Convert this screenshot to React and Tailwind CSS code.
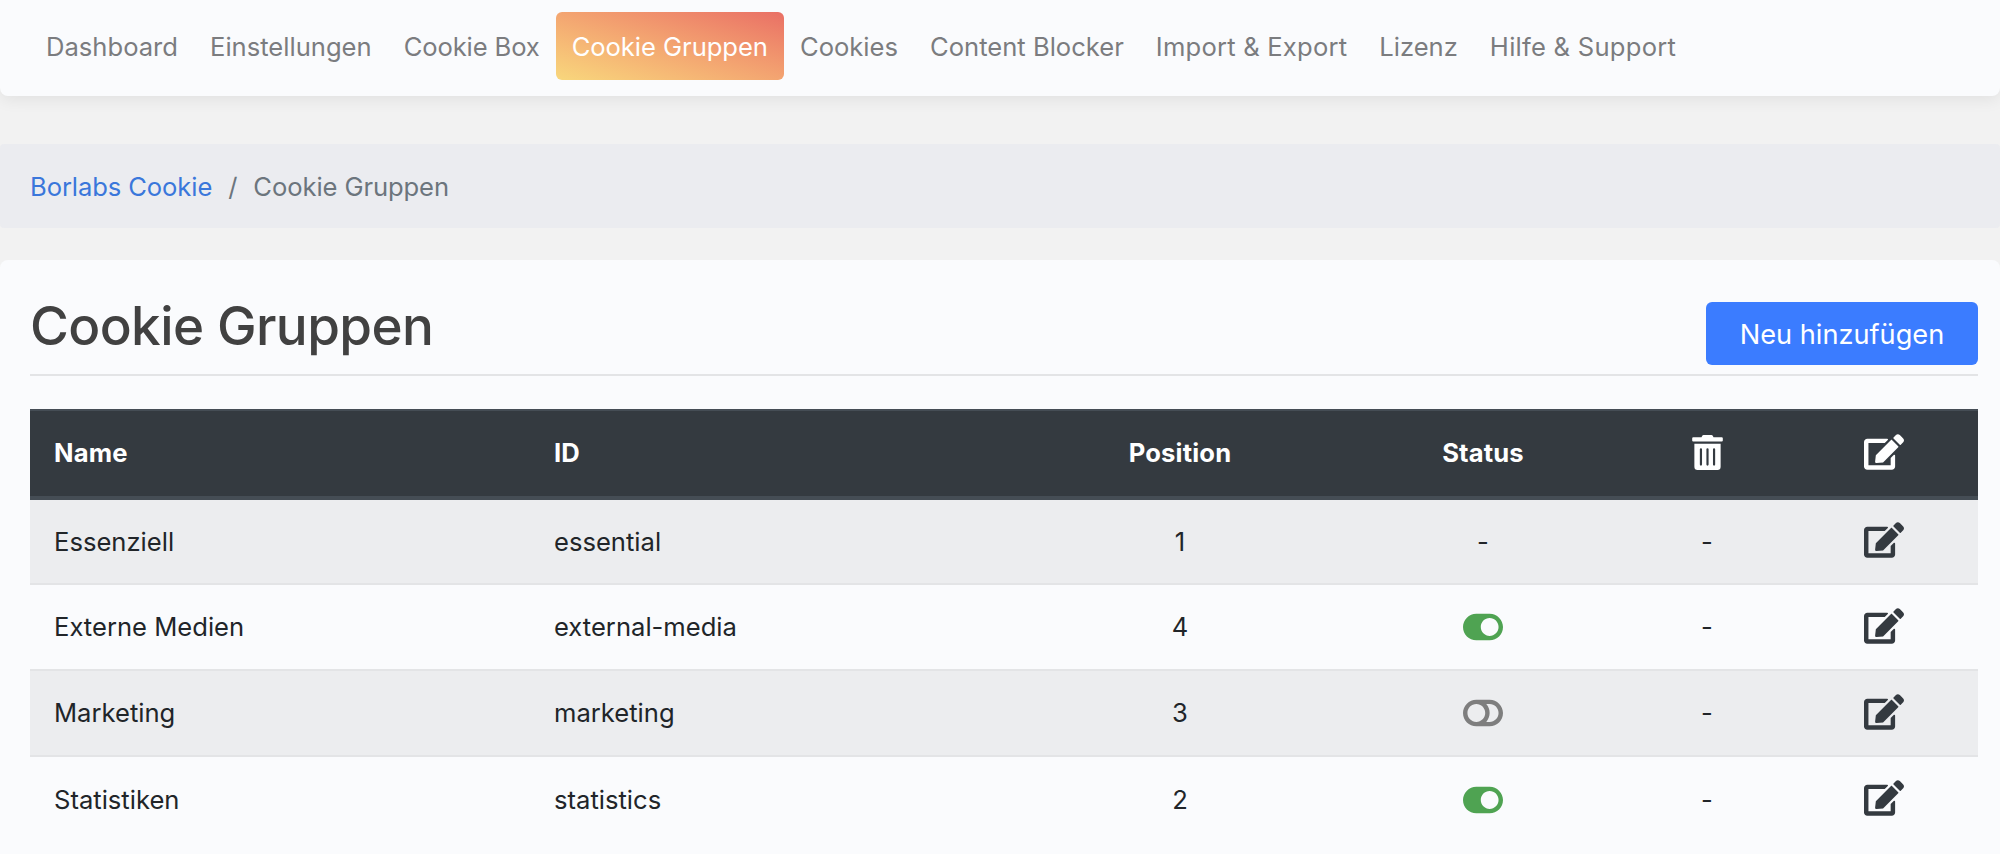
import { FaEdit, FaTrashAlt, FaToggleOn, FaToggleOff } from "react-icons/fa"

const navItems = [
  { label: "Dashboard", tracking: "" },
  { label: "Einstellungen", tracking: "" },
  { label: "Cookie Box", tracking: "tracking-[-0.13px]" },
  { label: "Cookie Gruppen", tracking: "tracking-[-0.05px]", active: true },
  { label: "Cookies", tracking: "" },
  { label: "Content Blocker", tracking: "" },
  { label: "Import & Export", tracking: "tracking-[0.2px]" },
  { label: "Lizenz", tracking: "" },
  { label: "Hilfe & Support", tracking: "tracking-[0.25px]" },
]

const rows = [
  { name: "Essenziell", id: "essential", position: 1, status: null, bg: "bg-[#ecedef]" },
  { name: "Externe Medien", id: "external-media", position: 4, status: true, bg: "" },
  { name: "Marketing", id: "marketing", position: 3, status: false, bg: "bg-[#ecedef]" },
  { name: "Statistiken", id: "statistics", position: 2, status: true, bg: "" },
]

const Status = ({ status }) => {
  if (status === null) return "-"
  if (status) return <FaToggleOn className="inline-block -translate-y-px align-middle text-[40px] text-[#4fa352]" />
  return <FaToggleOff className="inline-block -translate-y-px align-middle text-[40px] text-[#7e7e7e]" />
}

const App = () => {
  return (
    <div className="h-[854px] overflow-hidden bg-[#f2f2f2] font-['Inter',sans-serif] text-[25.6px] text-[#212529]">
      {/* top nav */}
      <nav className="flex h-[96px] items-start rounded-b-lg bg-[#fafbfd] px-[30px] py-3 shadow-[0_4px_16px_rgba(0,0,0,0.07)]">
        {navItems.map((item) =>
          item.active ? (
            <a key={item.label} className={`flex h-[68px] items-center rounded-md bg-gradient-to-tr from-[#f8d77c] to-[#e96f65] px-4 pt-[2px] text-white ${item.tracking}`}>
              {item.label}
            </a>
          ) : (
            <a key={item.label} className={`flex h-[68px] items-center px-4 pt-[2px] text-[#7b7c7f] ${item.tracking}`}>
              {item.label}
            </a>
          )
        )}
      </nav>

      {/* breadcrumb */}
      <div className="mt-12 flex h-[84px] items-center rounded bg-[#ebecf0] px-[30px] pt-[2px] tracking-[-0.1px]">
        <a className="text-[#3a77db]">Borlabs Cookie</a>
        <span className="px-4 text-[#6c757d]">/</span>
        <span className="text-[#6c757d]">Cookie Gruppen</span>
      </div>

      {/* card */}
      <div className="mt-8 h-full rounded-t-lg bg-[#fafbfd] pl-[30px] pr-[22px] pt-[34px]">
        <div className="flex h-[82px] items-start justify-between border-b-2 border-[#e3e4e6]">
          <h1 className="text-[53px] font-[540] leading-[64px] tracking-[-0.6px] text-[#414141]">Cookie Gruppen</h1>
          <button className="mt-2 h-[63px] w-[272px] rounded-md bg-[#3b7cff] pt-[3px] text-[27.2px] text-white">Neu hinzufügen</button>
        </div>

        <table className="mt-[33px] w-full table-fixed">
          <colgroup>
            <col className="w-[500px]" />
            <col className="w-[488px]" />
            <col className="w-[324px]" />
            <col className="w-[282px]" />
            <col className="w-[166px]" />
            <col className="w-[188px]" />
          </colgroup>
          <thead>
            <tr className="h-[88px] border-t-2 border-b-4 border-t-[#454d55] border-b-[#454d55] bg-[#343a40] font-bold tracking-[0.15px] text-white">
              <th className="px-6 text-left">Name</th>
              <th className="px-6 text-left">ID</th>
              <th className="text-center">Position</th>
              <th className="text-center">Status</th>
              <th className="text-center"><FaTrashAlt className="inline-block -translate-y-[3px] align-middle text-[35px]" /></th>
              <th className="text-center"><FaEdit className="inline-block -translate-y-0.5 align-middle text-[40px]" /></th>
            </tr>
          </thead>
          <tbody>
            {rows.map((row) => (
              <tr key={row.id} className={`h-[86px] border-b-2 border-[#e3e4e6] last:border-b-0 ${row.bg}`}>
                <td className="px-6 pt-px">{row.name}</td>
                <td className="px-6 pt-px">{row.id}</td>
                <td className="pt-px text-center">{row.position}</td>
                <td className="pt-px text-center"><Status status={row.status} /></td>
                <td className="pt-px text-center">-</td>
                <td className="text-center"><FaEdit className="inline-block -translate-y-0.5 align-middle text-[40px] text-[#343a40]" /></td>
              </tr>
            ))}
          </tbody>
        </table>
      </div>
    </div>
  )
}

export default App
